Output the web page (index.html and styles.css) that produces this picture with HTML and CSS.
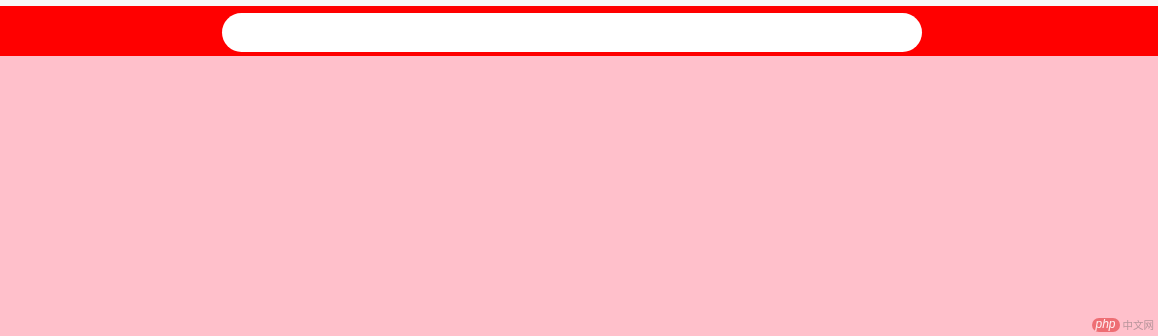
FILE: index.html
```html
<!DOCTYPE html>
<html lang="zh">
<head>
<meta charset="utf-8">
<title>Search</title>
<link rel="stylesheet" href="styles.css">
</head>
<body>
<div class="topline"></div>
<header class="bar">
  <input class="search" type="text" aria-label="search">
</header>
<main class="content"></main>
<div class="watermark"><span class="wm-pill">php</span><span class="wm-text">中文网</span></div>
</body>
</html>
```

FILE: styles.css
```css
html, body {
  margin: 0;
  padding: 0;
  height: 100%;
}
body {
  background: pink;
  font-family: "Liberation Sans", "Noto Sans CJK SC", sans-serif;
  display: flex;
  flex-direction: column;
}
.topline {
  height: 6px;
  background: #f8f8f8;
  flex: none;
}
.bar {
  height: 50px;
  background: #ff0000;
  flex: none;
  box-sizing: border-box;
  padding: 7px 0 0 222px;
}
.search {
  display: block;
  width: 700px;
  height: 39px;
  box-sizing: border-box;
  border: none;
  border-radius: 20px;
  background: #fff;
  outline: none;
  padding: 0 20px;
}
.content {
  flex: 1;
}
.watermark {
  position: fixed;
  right: 4px;
  bottom: 4px;
  display: flex;
  align-items: center;
  gap: 3px;
}
.wm-pill {
  display: inline-block;
  width: 28px;
  height: 14px;
  line-height: 13px;
  border-radius: 7px;
  background: #ee6e74;
  color: #ffeef0;
  font-size: 12px;
  font-style: italic;
  text-align: center;
}
.wm-text {
  color: #b8959c;
  font-size: 10.5px;
  font-family: "Noto Sans CJK SC", sans-serif;
}
```
